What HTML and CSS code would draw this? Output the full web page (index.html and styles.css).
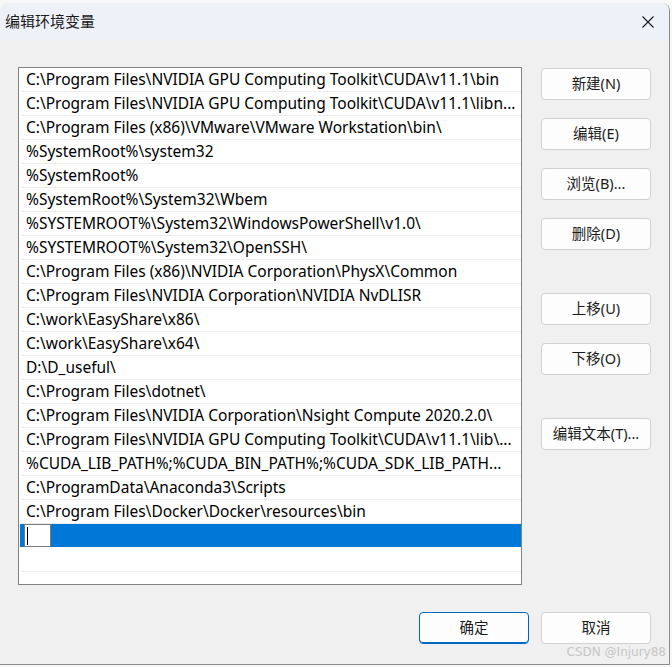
FILE: index.html
```html
<!DOCTYPE html>
<html lang="zh-CN">
<head>
    <meta charset="UTF-8">
    <title>编辑环境变量</title>
    <link rel="stylesheet" href="styles.css">
</head>
<body>
    <div class="window">
        <div class="titlebar">
            <span class="title">编辑环境变量</span>
            <svg class="close" width="12" height="12" viewBox="0 0 12 12">
                <path d="M0.5 0.5 L11.5 11.5 M11.5 0.5 L0.5 11.5" stroke="#1a1a1a" stroke-width="1.1" fill="none"/>
            </svg>
        </div>

        <div class="content">
            <div class="list">
                <div class="row">C:\Program Files\NVIDIA GPU Computing Toolkit\CUDA\v11.1\bin</div>
                <div class="row">C:\Program Files\NVIDIA GPU Computing Toolkit\CUDA\v11.1\libn...</div>
                <div class="row">C:\Program Files (x86)\VMware\VMware Workstation\bin\</div>
                <div class="row">%SystemRoot%\system32</div>
                <div class="row">%SystemRoot%</div>
                <div class="row">%SystemRoot%\System32\Wbem</div>
                <div class="row">%SYSTEMROOT%\System32\WindowsPowerShell\v1.0\</div>
                <div class="row">%SYSTEMROOT%\System32\OpenSSH\</div>
                <div class="row">C:\Program Files (x86)\NVIDIA Corporation\PhysX\Common</div>
                <div class="row">C:\Program Files\NVIDIA Corporation\NVIDIA NvDLISR</div>
                <div class="row">C:\work\EasyShare\x86\</div>
                <div class="row">C:\work\EasyShare\x64\</div>
                <div class="row">D:\D_useful\</div>
                <div class="row">C:\Program Files\dotnet\</div>
                <div class="row">C:\Program Files\NVIDIA Corporation\Nsight Compute 2020.2.0\</div>
                <div class="row">C:\Program Files\NVIDIA GPU Computing Toolkit\CUDA\v11.1\lib\...</div>
                <div class="row">%CUDA_LIB_PATH%;%CUDA_BIN_PATH%;%CUDA_SDK_LIB_PATH...</div>
                <div class="row">C:\ProgramData\Anaconda3\Scripts</div>
                <div class="row">C:\Program Files\Docker\Docker\resources\bin</div>
                <div class="row selected"><span class="editbox"><span class="caret"></span></span></div>
                <div class="row"></div>
            </div>

            <div class="actions">
                <button class="btn">新建(N)</button>
                <button class="btn">编辑(E)</button>
                <button class="btn">浏览(B)...</button>
                <button class="btn">删除(D)</button>
                <button class="btn group">上移(U)</button>
                <button class="btn">下移(O)</button>
                <button class="btn group">编辑文本(T)...</button>
            </div>
        </div>

        <div class="footer">
            <button class="btn primary">确定</button>
            <button class="btn">取消</button>
        </div>

        <span class="watermark">CSDN @Injury88</span>
    </div>
</body>
</html>
```

FILE: styles.css
```css
body {
    margin: 0;
    background: #f7f7f7;
    font-family: "Noto Sans", "Noto Sans CJK SC", sans-serif;
    color: #000;
}

.window {
    position: relative;
    margin-top: 3px;
    width: 670px;
    height: 662px;
    box-sizing: border-box;
    background: #f0f0f0;
    border-right: 1px solid #8c8c8c;
    border-bottom: 1px solid #8c8c8c;
    border-radius: 8px 8px 0 0;
    overflow: hidden;
}

.titlebar {
    height: 37px;
    box-sizing: border-box;
    background: #eef2f8;
    display: flex;
    align-items: center;
    justify-content: space-between;
    padding: 0 15px 3px 5px;
}

.title {
    font-size: 15px;
    font-family: "Noto Sans CJK SC", sans-serif;
    color: #1a1a1a;
}

.close {
    display: block;
    margin-top: 3px;
}

.content {
    display: flex;
    padding: 27px 0 0 18px;
}

.list {
    width: 504px;
    height: 518px;
    box-sizing: border-box;
    border: 1px solid #828282;
    background: #fff;
    padding-left: 1px;
    overflow: hidden;
}

.row {
    height: 24px;
    box-sizing: border-box;
    border-bottom: 1px solid #ececec;
    margin-left: 1px;
    padding-left: 5px;
    font-size: 15.5px;
    line-height: 23px;
    white-space: nowrap;
    overflow: hidden;
}

.row.selected {
    background: #0078d7;
    margin-left: 0;
    padding-left: 4px;
    border-bottom-color: #ffffff;
}

.editbox {
    display: inline-block;
    width: 27px;
    height: 23px;
    box-sizing: border-box;
    background: #fff;
    border: 1px solid #7a7a7a;
    vertical-align: top;
    position: relative;
}

.caret {
    position: absolute;
    left: 2px;
    top: 2px;
    width: 1px;
    height: 18px;
    background: #000;
}

.actions {
    display: flex;
    flex-direction: column;
    gap: 18px;
    margin-left: 19px;
    padding-top: 1px;
}

.btn {
    width: 110px;
    height: 32px;
    box-sizing: border-box;
    background: #fdfdfd;
    border: 1px solid #d0d0d0;
    border-radius: 4px;
    font-family: "Noto Sans", "Noto Sans CJK SC", sans-serif;
    font-size: 14.5px;
    color: #1a1a1a;
    padding: 0 0 3px;
}

.btn.group {
    margin-top: 25px;
}

.footer {
    display: flex;
    gap: 12px;
    padding: 27px 0 0 419px;
}

.btn.primary {
    border: 1px solid #0067c0;
    box-shadow: inset 0 -1px 0 #0067c0;
}

.watermark {
    position: absolute;
    right: 3px;
    bottom: 5px;
    font-family: "DejaVu Sans", sans-serif;
    font-size: 12px;
    color: #c6c6c6;
}
```
